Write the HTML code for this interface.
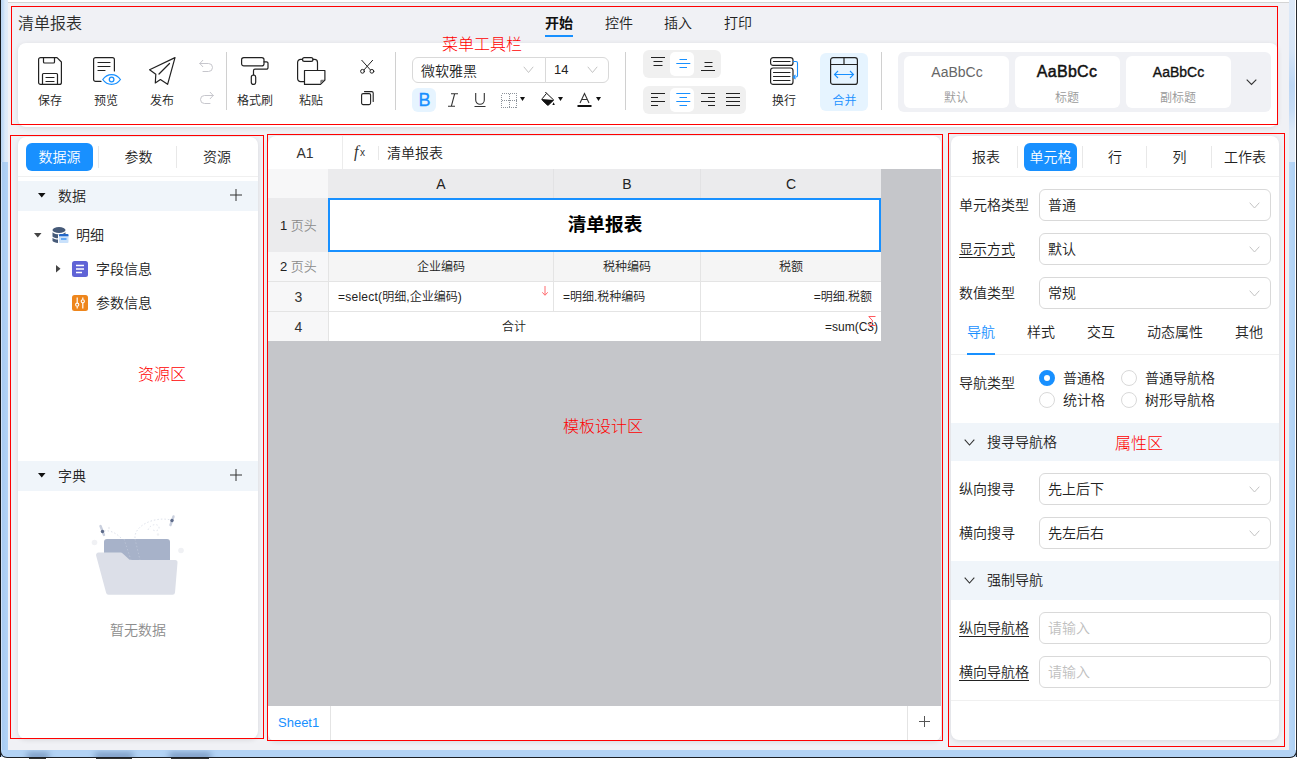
<!DOCTYPE html>
<html lang="zh-CN">
<head>
<meta charset="utf-8">
<title>清单报表</title>
<style>
*{box-sizing:border-box;margin:0;padding:0}
html,body{width:1298px;height:759px;overflow:hidden;background:#fff}
body{font-family:"Liberation Sans","Noto Sans CJK SC",sans-serif;font-size:14px;color:#222;position:relative;font-weight:350}
.abs{position:absolute}
#win{position:absolute;left:0;top:0;width:1298px;height:759px;background:#fff;overflow:hidden}
#app{left:8px;top:3px;width:1281px;height:747px;background:#f0f1f5}
#topline{left:8px;top:2px;width:1281px;height:1px;background:#d4d4d4}
.red{position:absolute;border:1px solid #f00;pointer-events:none}
.redtxt{position:absolute;color:#f00;font-size:16px;line-height:20px;white-space:nowrap;font-weight:300}
.card{position:absolute;background:#fff;border-radius:8px;box-shadow:0 1px 5px rgba(0,0,0,.1)}
.t{position:absolute;white-space:nowrap;line-height:20px;height:20px}
.c{transform:translateX(-50%)}
.r{transform:translateX(-100%)}
.f12{font-size:12px}.f13{font-size:13px}.f14{font-size:14px}
svg{position:absolute;overflow:visible}
.ico{fill:none;stroke:#222;stroke-width:1.2;stroke-linecap:round;stroke-linejoin:round}
.vsep{position:absolute;width:1px;background:#d0d0d0}
.sel{position:absolute;height:32px;border:1px solid #d9d9d9;border-radius:6px;background:#fff}
.hl{position:absolute;height:1px;background:#f0f0f0}
.u{text-decoration:underline;text-underline-offset:3px;text-decoration-thickness:1px}
.ph{color:#bfbfbf}
.sec{position:absolute;background:#f0f5fa}
.radio{position:absolute;width:16px;height:16px;border-radius:50%;border:1px solid #d9d9d9;background:#fff}
.radio.on{border:5px solid #1890ff}
</style>
</head>
<body>
<div id="win">
<div class="abs" id="app"></div>
<div class="abs" id="topline"></div>
<!-- ===== TOP TOOLBAR ===== -->
<div id="toolbar">
<div class="t" style="left:18px;top:14px;font-size:16px;color:#2b2b2b">清单报表</div>
<div class="t c" style="left:559px;top:13px;font-weight:700;color:#111">开始</div>
<div class="abs" style="left:545px;top:35px;width:28px;height:2px;background:#1890ff"></div>
<div class="t c" style="left:619px;top:13px">控件</div>
<div class="t c" style="left:678px;top:13px">插入</div>
<div class="t c" style="left:738px;top:13px">打印</div>
<div class="card" style="left:18px;top:43px;width:1260px;height:84px"></div>

<!-- save -->
<svg style="left:38px;top:57px" width="24" height="28" viewBox="0 0 24 28"><g class="ico">
<path d="M3 .6H19L23.4 5V25.4a2 2 0 0 1-2 2H2.6a2 2 0 0 1-2-2V2.6a2 2 0 0 1 2-2Z"/>
<path d="M5.5 .6V5a1 1 0 0 0 1 1h9a1 1 0 0 0 1-1V.6"/>
<path d="M4.5 27.4V17.5a1 1 0 0 1 1-1h13a1 1 0 0 1 1 1v9.9"/>
<path d="M8 20.500h8M8 24.500h8"/></g></svg>
<div class="t c f12" style="left:50px;top:91px">保存</div>
<!-- preview -->
<svg style="left:93px;top:57px" width="28" height="28" viewBox="0 0 28 28"><g class="ico">
<path d="M8 24.4H2.6a2 2 0 0 1-2-2V2.6a2 2 0 0 1 2-2H19.400a2 2 0 0 1 2 2V14"/>
<path d="M5 5.500h12M5 9.500h12M5 13.500h7"/></g>
<path d="M9.8 22.5C12.5 18.6 15.5 17.6 18.6 17.6s6.100 1 8.800 4.900C24.700 26.400 21.700 27.400 18.600 27.400S12.500 26.400 9.800 22.500Z" fill="#fff" stroke="#1890ff" stroke-width="1.300"/>
<circle cx="18.600" cy="22.500" r="2.300" fill="none" stroke="#1890ff" stroke-width="1.300"/></svg>
<div class="t c f12" style="left:106px;top:91px">预览</div>
<!-- publish -->
<svg style="left:148px;top:57px" width="28" height="28" viewBox="0 0 28 28"><g class="ico">
<path d="M27 .6L1.600 12.800L7.800 17.300L7.300 26L12.400 22.600L19.600 27.300Z"/>
<path d="M21.500 6.500L11 17"/></g></svg>
<div class="t c f12" style="left:162px;top:91px">发布</div>
<!-- undo / redo -->
<svg style="left:199px;top:59px" width="15" height="13" viewBox="0 0 15 13"><g class="ico" style="stroke:#c6c6cc;stroke-width:1">
<path d="M.8 4.500H9.500a4 4 0 0 1 0 8H4"/><path d="M3.800 1.300L.8 4.500L3.800 7.700"/></g></svg>
<svg style="left:199px;top:91px" width="15" height="13" viewBox="0 0 15 13"><g class="ico" style="stroke:#c6c6cc;stroke-width:1">
<path d="M14.200 4.500H5.500a4 4 0 0 0 0 8H11"/><path d="M11.200 1.300L14.200 4.500L11.200 7.700"/></g></svg>
<div class="vsep" style="left:226px;top:52px;height:58px"></div>
<!-- format painter -->
<svg style="left:240px;top:57px" width="30" height="28" viewBox="0 0 30 28"><g class="ico">
<rect x="1.600" y=".6" width="22.400" height="8.300" rx="2.200"/>
<path d="M24 4.800H26.500a1.500 1.500 0 0 1 1.500 1.500V10.700a1.500 1.500 0 0 1-1.500 1.500H15a1.500 1.500 0 0 0-1.500 1.500V18"/>
<rect x="11.300" y="18" width="4.400" height="9.400" rx="2.200"/></g></svg>
<div class="t c f12" style="left:255px;top:91px">格式刷</div>
<!-- paste -->
<svg style="left:297px;top:57px" width="29" height="28" viewBox="0 0 29 28"><g class="ico">
<path d="M7.500 24.600H3.600a3 3 0 0 1-3-3V5.400a3 3 0 0 1 3-3H5.500M16 2.400h1.500a3 3 0 0 1 3 3V13"/>
<rect x="5.500" y=".6" width="10.500" height="3.800" rx="1.900"/>
<path d="M7.500 13.500H27.900V23L23.500 27.400H7.500Z" fill="#fff"/></g>
<path d="M27.400 22.800L23.300 26.900V24a1.200 1.200 0 0 1 1.200-1.200Z" fill="#777"/></svg>
<div class="t c f12" style="left:311px;top:91px">粘贴</div>
<!-- cut -->
<svg style="left:360px;top:60px" width="15" height="14" viewBox="0 0 15 14"><g class="ico" style="stroke-width:1">
<path d="M1.800 .3L10.300 9.800M12.600 .3L4.100 9.800"/><circle cx="2.500" cy="11.300" r="1.900"/><circle cx="11.900" cy="11.300" r="1.900"/></g></svg>
<!-- copy -->
<svg style="left:361px;top:91px" width="13" height="15" viewBox="0 0 13 15"><g class="ico" style="stroke-width:1.100">
<rect x=".6" y="2.600" width="9" height="11" rx="1.500"/>
<path d="M3.500 .6H10.700a1.500 1.500 0 0 1 1.500 1.500V10.500"/></g></svg>
<div class="vsep" style="left:395px;top:52px;height:58px"></div>
<!-- font selects -->
<div class="sel" style="left:412px;top:57px;width:134px;height:26px;border-radius:6px 0 0 6px"></div>
<div class="sel" style="left:545px;top:57px;width:64px;height:26px;border-radius:0 6px 6px 0"></div>
<div class="t" style="left:421px;top:61px;font-size:14px">微软雅黑</div>
<div class="t f13" style="left:554px;top:60px">14</div>
<svg style="left:523px;top:66px" width="11" height="8" viewBox="0 0 11 8"><path d="M.8 .8L5.500 6.500L10.200 .8" fill="none" stroke="#c4c4c4" stroke-width="1"/></svg>
<svg style="left:587px;top:66px" width="11" height="8" viewBox="0 0 11 8"><path d="M.8 .8L5.500 6.500L10.200 .8" fill="none" stroke="#c4c4c4" stroke-width="1"/></svg>
<!-- B I U -->
<div class="abs" style="left:412px;top:88px;width:24px;height:24px;border-radius:6px;background:#e6f4ff"></div>
<div class="t c" style="left:424.500px;top:90px;font-size:18px;color:#1890ff;-webkit-text-stroke:.3px #1890ff">B</div>
<svg style="left:447px;top:93px" width="12" height="14" viewBox="0 0 12 14"><path d="M4 .7H11M1 13.300H8M7.700 .7L4.300 13.300" fill="none" stroke="#333" stroke-width="1.100"/></svg>
<svg style="left:474px;top:93px" width="12" height="14" viewBox="0 0 12 14"><path d="M1.700 0V7a4.300 4.300 0 0 0 8.600 0V0M.5 13.500H11.500" fill="none" stroke="#333" stroke-width="1.100"/></svg>
<!-- border icon -->
<svg style="left:501px;top:93px" width="16" height="15" viewBox="0 0 16 15"><g fill="none" stroke="#8d939b" stroke-width="1" stroke-dasharray="1 1" shape-rendering="crispEdges">
<rect x=".5" y=".5" width="15" height="14"/><path d="M8.500 .5V14.500M.5 7.500H15.500"/></g></svg>
<svg style="left:520px;top:97px" width="6" height="4" viewBox="0 0 6 4"><path d="M0 0H5L2.500 4Z" fill="#111"/></svg>
<!-- fill icon -->
<svg style="left:541px;top:92px" width="14" height="14" viewBox="0 0 14 14"><path d="M4.300 0L5.600 1.300L12.700 8L7.600 12.900a1 1 0 0 1-1.400 0L1.200 8.100a1 1 0 0 1 0-1.400L5.600 1.300" fill="none" stroke="#111" stroke-width="1"/><path d="M1 7L12.700 8L7.600 12.900a1 1 0 0 1-1.400 0L1.200 8.100Z" fill="#111"/><path d="M12.600 10.300L13.800 13H11.400Z" fill="#111"/></svg>
<svg style="left:558px;top:97px" width="6" height="4" viewBox="0 0 6 4"><path d="M0 0H5L2.500 4Z" fill="#111"/></svg>
<!-- font color -->
<svg style="left:577px;top:93px" width="15" height="14" viewBox="0 0 15 14"><path d="M3 10L7.500 .5L12 10M4.700 6.500H10.300" fill="none" stroke="#333" stroke-width="1.100"/><rect x=".5" y="12" width="14" height="2" fill="#111"/></svg>
<svg style="left:596px;top:97px" width="6" height="4" viewBox="0 0 6 4"><path d="M0 0H5L2.500 4Z" fill="#111"/></svg>
<div class="vsep" style="left:625px;top:52px;height:58px"></div>
<!-- align groups -->
<div class="abs" style="left:643px;top:50px;width:78px;height:28px;border-radius:6px;background:#f0f0f0"></div>
<div class="abs" style="left:670px;top:52px;width:24px;height:24px;border-radius:5px;background:#fff"></div>
<div class="abs" style="left:643px;top:86px;width:103px;height:28px;border-radius:6px;background:#f0f0f0"></div>
<div class="abs" style="left:670px;top:88px;width:24px;height:24px;border-radius:5px;background:#fff"></div>
<svg style="left:643px;top:50px" width="103" height="64" viewBox="0 0 103 64"><g fill="none" stroke="#222" stroke-width="1.100">
<path d="M8 7.500H22M10.500 11.500H19.500M10.500 15.500H19.500"/>
<path d="M61.500 12.500H69.500M61.500 16.500H69.500M58 20.500H72"/>
<path d="M8 43.500H22M8 47.500H15M8 51.500H22M8 55.500H15"/>
<path d="M58 43.500H72M65 47.500H72M58 51.500H72M65 55.500H72"/>
<path d="M83 43.500H97M83 47.500H97M83 51.500H97M83 55.500H97"/></g>
<g fill="none" stroke="#1890ff" stroke-width="1.100">
<path d="M36.500 9.500H44M33.300 13.500H47.300M36.500 17.500H44"/>
<path d="M33.300 43.500H47.300M36.500 47.500H44M33.300 51.500H47.300M36.500 55.500H44"/></g></svg>
<!-- wrap -->
<svg style="left:770px;top:57px" width="29" height="28" viewBox="0 0 29 28"><g class="ico">
<rect x=".6" y=".6" width="22.400" height="7.800" rx="2.500"/><path d="M3.500 4.500H20"/>
<rect x=".6" y="11" width="22.400" height="16.400" rx="2.500"/><path d="M3.500 15.500H20M3.500 19.500H20M3.500 23.500H20"/></g>
<path d="M23 4.500H26a1.500 1.500 0 0 1 1.500 1.500V18.500a1.500 1.500 0 0 1-1.500 1.500H23.500M25.500 17.800L23.300 20L25.500 22.200" fill="none" stroke="#1890ff" stroke-width="1.100"/></svg>
<div class="t c f12" style="left:784px;top:91px">换行</div>
<!-- merge -->
<div class="abs" style="left:820px;top:53px;width:48px;height:58px;border-radius:6px;background:#e6f4ff"></div>
<svg style="left:830px;top:57px" width="28" height="28" viewBox="0 0 28 28"><g class="ico">
<rect x=".6" y=".6" width="26.800" height="26.800" rx="2.500"/><path d="M.6 7.500H27.400M14 .6V7.500"/></g>
<path d="M4.500 17.500H23.500M8 14L4.500 17.500L8 21M20 14L23.500 17.500L20 21" fill="none" stroke="#1890ff" stroke-width="1.100"/></svg>
<div class="t c f12" style="left:844.500px;top:91px;color:#1890ff">合并</div>
<div class="vsep" style="left:881px;top:52px;height:58px"></div>
<!-- style gallery -->
<div class="abs" style="left:898px;top:52px;width:373px;height:60px;border-radius:6px;background:#f0f1f5"></div>
<div class="abs" style="left:904px;top:56px;width:105px;height:52px;border-radius:6px;background:#fff"></div>
<div class="abs" style="left:1015px;top:56px;width:105px;height:52px;border-radius:6px;background:#fff"></div>
<div class="abs" style="left:1126px;top:56px;width:105px;height:52px;border-radius:6px;background:#fff"></div>
<div class="t c" style="left:957px;top:62px;color:#666">AaBbCc</div>
<div class="t c f12" style="left:956px;top:88px;color:#999">默认</div>
<div class="t c" style="left:1067px;top:62px;font-size:16px;color:#111;-webkit-text-stroke:.45px #111;letter-spacing:.3px">AaBbCc</div>
<div class="t c f12" style="left:1067px;top:88px;color:#999">标题</div>
<div class="t c" style="left:1178.500px;top:62px;color:#111;-webkit-text-stroke:.35px #111">AaBbCc</div>
<div class="t c f12" style="left:1178px;top:88px;color:#999">副标题</div>
<svg style="left:1246px;top:79px" width="11" height="7" viewBox="0 0 11 7"><path d="M.7 .7L5.500 5.500L10.300 .7" fill="none" stroke="#333" stroke-width="1.100"/></svg>
</div>
<!-- ===== LEFT PANEL ===== -->
<div id="left">
<div class="card" style="left:18px;top:137px;width:240px;height:602px"></div>
<div class="abs" style="left:26px;top:143px;width:67px;height:28px;border-radius:6px;background:#1890ff"></div>
<div class="t c" style="left:59.500px;top:147px;color:#fff">数据源</div>
<div class="vsep" style="left:98px;top:146px;height:22px;background:#e8e8e8"></div>
<div class="t c" style="left:138.500px;top:147px">参数</div>
<div class="vsep" style="left:176px;top:146px;height:22px;background:#e8e8e8"></div>
<div class="t c" style="left:217px;top:147px">资源</div>
<div class="hl" style="left:18px;top:176px;width:240px"></div>
<!-- section: 数据 -->
<div class="sec" style="left:18px;top:181px;width:240px;height:30px"></div>
<svg style="left:38px;top:193px" width="8" height="5" viewBox="0 0 8 5"><path d="M0 0H7.500L3.750 4.500Z" fill="#111"/></svg>
<div class="t" style="left:58px;top:186px">数据</div>
<svg style="left:230px;top:189px" width="12" height="12" viewBox="0 0 12 12"><path d="M6 0V12M0 6H12" stroke="#333" stroke-width="1" fill="none"/></svg>
<!-- tree -->
<svg style="left:34px;top:233px" width="8" height="5" viewBox="0 0 8 5"><path d="M0 0H7.500L3.750 4.500Z" fill="#444"/></svg>
<svg style="left:52px;top:227px" width="17" height="16" viewBox="0 0 17 16">
<ellipse cx="7" cy="3" rx="6.500" ry="3" fill="#465a78"/>
<path d="M.5 5.200C2 7 5 7.300 7 7.300S12 7 13.500 5.200V7.500H6V11.300C3.500 11.200 1.500 10.600 .5 9.500Z" fill="#465a78"/>
<path d="M.5 10.700C1.500 11.800 3.500 12.500 6 12.600V15.900C3.500 15.800 1.500 15.200 .5 14Z" fill="#465a78"/>
<rect x="7" y="7" width="9.500" height="9" rx="1" fill="#c9e1fb"/>
<path d="M7 8a1 1 0 0 1 1-1H15.500a1 1 0 0 1 1 1V9.200H7Z" fill="#2468c8"/>
<path d="M9 12H14.500" stroke="#2f8df5" stroke-width="1.300" fill="none"/></svg>
<div class="t" style="left:76px;top:225px">明细</div>
<svg style="left:56px;top:265px" width="5" height="8" viewBox="0 0 5 8"><path d="M0 0V7.500L4.500 3.750Z" fill="#444"/></svg>
<svg style="left:72px;top:261px" width="16" height="16" viewBox="0 0 16 16"><rect width="16" height="16" rx="2.500" fill="#5f63d6"/><path d="M4 4.500H12M4 8H12M4 11.500H10" stroke="#fff" stroke-width="1.400" fill="none"/></svg>
<div class="t" style="left:96px;top:259px">字段信息</div>
<svg style="left:72px;top:295px" width="16" height="16" viewBox="0 0 16 16"><rect width="16" height="16" rx="2.500" fill="#ee861c"/><path d="M5.200 2.500V8M5.200 11.500V13.500M10.800 2.500V4.500M10.800 8V13.500" stroke="#fff" stroke-width="1.200" fill="none"/><circle cx="5.200" cy="9.700" r="1.600" fill="none" stroke="#fff" stroke-width="1.100"/><circle cx="10.800" cy="6.300" r="1.600" fill="none" stroke="#fff" stroke-width="1.100"/></svg>
<div class="t" style="left:96px;top:293px">参数信息</div>
<!-- section: 字典 -->
<div class="sec" style="left:18px;top:461px;width:240px;height:30px"></div>
<svg style="left:38px;top:473px" width="8" height="5" viewBox="0 0 8 5"><path d="M0 0H7.500L3.750 4.500Z" fill="#111"/></svg>
<div class="t" style="left:58px;top:466px">字典</div>
<svg style="left:230px;top:469px" width="12" height="12" viewBox="0 0 12 12"><path d="M6 0V12M0 6H12" stroke="#333" stroke-width="1" fill="none"/></svg>
<!-- empty illustration -->
<svg style="left:88px;top:512px" width="100" height="86" viewBox="0 0 100 86">
<circle cx="6.500" cy="30.500" r="2.800" fill="#f0f1f4"/><circle cx="93" cy="38.500" r="2.800" fill="#f0f1f4"/>
<circle cx="21" cy="16" r="1.200" fill="#f0f1f4"/><circle cx="70" cy="22.500" r="1.200" fill="#f0f1f4"/>
<path d="M33 26C27 20 21 18 15 19" fill="none" stroke="#dfe3ec" stroke-width="1" stroke-dasharray="1.500 2"/>
<path d="M47 26C46 14 66 4 83 8" fill="none" stroke="#dfe3ec" stroke-width="1" stroke-dasharray="1.500 2"/>
<path d="M60 18C62 12 70 11 71 15S66 20 64 17" fill="none" stroke="#e4e7ef" stroke-width="1" stroke-dasharray="1.500 2"/>
<path d="M12.500 14L16 23" stroke="#c9cfdd" stroke-width="2.400" stroke-linecap="round"/><circle cx="14.500" cy="19.500" r="1.700" fill="#5d6b8a"/>
<path d="M85.500 4.500L82.500 13" stroke="#c9cfdd" stroke-width="2.400" stroke-linecap="round"/><circle cx="84" cy="8.500" r="1.700" fill="#5d6b8a"/>
<rect x="16" y="27" width="66" height="30" rx="3" fill="#a7b2c9"/>
<path d="M36 27L43 48M47 27L52 48" stroke="#b9c2d5" stroke-width="1" stroke-dasharray="1.500 2" fill="none"/>
<path d="M10.500 40.500H32.500a3 3 0 0 1 2.200 1L41 47.300a2 2 0 0 0 1.500 .7H87a2.500 2.500 0 0 1 2.500 2.700L87 80.500a2.500 2.500 0 0 1-2.500 2.300H20.500a2.500 2.500 0 0 1-2.400-2L8.100 43.500a2.500 2.500 0 0 1 2.400-3Z" fill="#dcdfe8"/>
</svg>
<div class="t c" style="left:138px;top:620px;color:#8c8c8c">暂无数据</div>
</div>
<!-- ===== CENTER PANEL ===== -->
<div id="center">
<div class="card" style="left:268px;top:136px;width:673px;height:605px;overflow:hidden">
  <div class="abs" style="left:0;top:33px;width:674px;height:537px;background:#c5c6ca"></div>
</div>
<!-- formula bar -->
<div class="vsep" style="left:342px;top:136px;height:33px;background:#ececec"></div>
<div class="t c" style="left:305px;top:143px;color:#333">A1</div>
<div class="t" style="left:354px;top:142px;font-family:'Liberation Serif','DejaVu Serif',serif;font-style:italic;font-size:16px;color:#333">f<span style="font-family:'Liberation Sans',sans-serif;font-style:normal;font-size:10px;position:relative;top:-1px;left:1.500px">x</span></div>
<div class="vsep" style="left:378px;top:146px;height:14px;background:#e8e8e8"></div>
<div class="t" style="left:387px;top:143px;color:#222">清单报表</div>
<!-- grid -->
<div class="abs" style="left:268px;top:169px;width:613px;height:172px;background:#fff"></div>
<div class="abs" style="left:268px;top:169px;width:60px;height:29px;background:#f7f7f8"></div>
<div class="abs" style="left:328px;top:169px;width:553px;height:29px;background:#ebebed"></div>
<div class="abs" style="left:268px;top:198px;width:60px;height:54px;background:#ebebed"></div>
<div class="abs" style="left:268px;top:252px;width:60px;height:89px;background:#f7f7f8"></div>
<div class="abs" style="left:328px;top:252px;width:553px;height:30px;background:#f5f5f5"></div>
<!-- grid lines -->
<div class="abs" style="left:553px;top:169px;width:1px;height:29px;background:#e2e2e4"></div>
<div class="abs" style="left:700px;top:169px;width:1px;height:29px;background:#e2e2e4"></div>
<div class="abs" style="left:328px;top:252px;width:1px;height:89px;background:#e4e4e4"></div>
<div class="abs" style="left:553px;top:252px;width:1px;height:60px;background:#e4e4e4"></div>
<div class="abs" style="left:700px;top:252px;width:1px;height:89px;background:#e4e4e4"></div>
<div class="abs" style="left:268px;top:281px;width:613px;height:1px;background:#e4e4e4"></div>
<div class="abs" style="left:268px;top:311px;width:613px;height:1px;background:#e4e4e4"></div>
<!-- col headers -->
<div class="t c" style="left:441px;top:174px;color:#222">A</div>
<div class="t c" style="left:627px;top:174px;color:#222">B</div>
<div class="t c" style="left:791px;top:174px;color:#222">C</div>
<!-- row headers -->
<div class="t f13" style="left:280px;top:216px;color:#222">1 <span style="color:#8c8c8c">页头</span></div>
<div class="t f13" style="left:280px;top:257px;color:#222">2 <span style="color:#8c8c8c">页头</span></div>
<div class="t c" style="left:298.500px;top:287px;color:#333">3</div>
<div class="t c" style="left:298.500px;top:317px;color:#333">4</div>
<!-- selection -->
<div class="abs" style="left:328px;top:198px;width:553px;height:54px;border:2px solid #1890ff;background:#fff"></div>
<div class="t c" style="left:605px;top:215px;font-size:18.670px;font-weight:700;color:#000">清单报表</div>
<!-- cells -->
<div class="t c f12" style="left:441px;top:257px">企业编码</div>
<div class="t c f12" style="left:627px;top:257px">税种编码</div>
<div class="t c f12" style="left:791px;top:257px">税额</div>
<div class="t f12" style="left:338px;top:287px"><span style="letter-spacing:.25px">=select(</span>明细,企业编码)</div>
<svg style="left:542px;top:286px" width="6" height="10" viewBox="0 0 6 10"><path d="M3 0V9M.3 6.300L3 9.300L5.700 6.300" fill="none" stroke="#ff6b6e" stroke-width="1"/></svg>
<div class="t f12" style="left:563px;top:287px">=明细.税种编码</div>
<div class="t r f12" style="left:872px;top:287px">=明细.税额</div>
<div class="t c f12" style="left:514px;top:317px">合计</div>
<div class="t r f12" style="left:878px;top:317px">=sum(C3)</div>
<svg style="left:868px;top:316px" width="8" height="10" viewBox="0 0 8 10"><path d="M7.500 .5H.8L4.800 5L.8 9.500H7.500" fill="none" stroke="#ff5a5f" stroke-width="1"/></svg>
<!-- sheet bar -->
<div class="abs" style="left:268px;top:706px;width:673px;height:35px;background:#fff;border-radius:0 0 8px 8px"></div>
<div class="t f13" style="left:278px;top:713px;color:#1890ff">Sheet1</div>
<div class="vsep" style="left:330px;top:706px;height:35px;background:#e4e4e4"></div>
<div class="vsep" style="left:907px;top:706px;height:35px;background:#e4e4e4"></div>
<svg style="left:919px;top:716px" width="12" height="12" viewBox="0 0 12 12"><path d="M5.500 0V11M0 5.500H11" stroke="#555" stroke-width="1" fill="none"/></svg>
</div>
<!-- ===== RIGHT PANEL ===== -->
<div id="right">
<div class="card" style="left:951px;top:136px;width:328px;height:604px"></div>
<div class="t c" style="left:986px;top:147px">报表</div>
<div class="vsep" style="left:1017px;top:146px;height:22px;background:#e8e8e8"></div>
<div class="abs" style="left:1024px;top:143px;width:53px;height:28px;border-radius:6px;background:#1890ff"></div>
<div class="t c" style="left:1050.500px;top:147px;color:#fff">单元格</div>
<div class="vsep" style="left:1082px;top:146px;height:22px;background:#e8e8e8"></div>
<div class="t c" style="left:1115px;top:147px">行</div>
<div class="vsep" style="left:1146px;top:146px;height:22px;background:#e8e8e8"></div>
<div class="t c" style="left:1179.500px;top:147px">列</div>
<div class="vsep" style="left:1211px;top:146px;height:22px;background:#e8e8e8"></div>
<div class="t c" style="left:1245px;top:147px">工作表</div>
<div class="hl" style="left:951px;top:176px;width:328px"></div>
<!-- form rows -->
<div class="t" style="left:959px;top:195px">单元格类型</div>
<div class="sel" style="left:1039px;top:189px;width:232px"></div>
<div class="t" style="left:1048px;top:195px">普通</div>
<svg style="left:1249px;top:202px" width="11" height="7" viewBox="0 0 11 7"><path d="M.7 .7L5.500 6L10.300 .7" fill="none" stroke="#c4c4c4" stroke-width="1"/></svg>
<div class="t u" style="left:959px;top:239px">显示方式</div>
<div class="sel" style="left:1039px;top:233px;width:232px"></div>
<div class="t" style="left:1048px;top:239px">默认</div>
<svg style="left:1249px;top:246px" width="11" height="7" viewBox="0 0 11 7"><path d="M.7 .7L5.500 6L10.300 .7" fill="none" stroke="#c4c4c4" stroke-width="1"/></svg>
<div class="t" style="left:959px;top:283px">数值类型</div>
<div class="sel" style="left:1039px;top:277px;width:232px"></div>
<div class="t" style="left:1048px;top:283px">常规</div>
<svg style="left:1249px;top:290px" width="11" height="7" viewBox="0 0 11 7"><path d="M.7 .7L5.500 6L10.300 .7" fill="none" stroke="#c4c4c4" stroke-width="1"/></svg>
<!-- sub tabs -->
<div class="t" style="left:967px;top:322px;color:#1890ff">导航</div>
<div class="t" style="left:1027px;top:322px">样式</div>
<div class="t" style="left:1087px;top:322px">交互</div>
<div class="t" style="left:1147px;top:322px">动态属性</div>
<div class="t" style="left:1235px;top:322px">其他</div>
<div class="hl" style="left:951px;top:354px;width:328px"></div>
<div class="abs" style="left:967px;top:353px;width:28px;height:2px;background:#1890ff"></div>
<!-- radio group -->
<div class="t" style="left:959px;top:373px">导航类型</div>
<div class="radio on" style="left:1039px;top:370px"></div>
<div class="t" style="left:1063px;top:368px">普通格</div>
<div class="radio" style="left:1121px;top:370px"></div>
<div class="t" style="left:1145px;top:368px">普通导航格</div>
<div class="radio" style="left:1039px;top:392px"></div>
<div class="t" style="left:1063px;top:390px">统计格</div>
<div class="radio" style="left:1121px;top:392px"></div>
<div class="t" style="left:1145px;top:390px">树形导航格</div>
<!-- section 1 -->
<div class="sec" style="left:951px;top:423px;width:328px;height:38px"></div>
<svg style="left:964px;top:439px" width="11" height="7" viewBox="0 0 11 7"><path d="M.7 .7L5.500 6L10.300 .7" fill="none" stroke="#333" stroke-width="1.100"/></svg>
<div class="t" style="left:987px;top:432px">搜寻导航格</div>
<div class="t" style="left:959px;top:479px">纵向搜寻</div>
<div class="sel" style="left:1039px;top:473px;width:232px"></div>
<div class="t" style="left:1048px;top:479px">先上后下</div>
<svg style="left:1249px;top:486px" width="11" height="7" viewBox="0 0 11 7"><path d="M.7 .7L5.500 6L10.300 .7" fill="none" stroke="#c4c4c4" stroke-width="1"/></svg>
<div class="t" style="left:959px;top:523px">横向搜寻</div>
<div class="sel" style="left:1039px;top:517px;width:232px"></div>
<div class="t" style="left:1048px;top:523px">先左后右</div>
<svg style="left:1249px;top:530px" width="11" height="7" viewBox="0 0 11 7"><path d="M.7 .7L5.500 6L10.300 .7" fill="none" stroke="#c4c4c4" stroke-width="1"/></svg>
<!-- section 2 -->
<div class="sec" style="left:951px;top:561px;width:328px;height:39px"></div>
<svg style="left:964px;top:577px" width="11" height="7" viewBox="0 0 11 7"><path d="M.7 .7L5.500 6L10.300 .7" fill="none" stroke="#333" stroke-width="1.100"/></svg>
<div class="t" style="left:987px;top:570px">强制导航</div>
<div class="t u" style="left:959px;top:618px">纵向导航格</div>
<div class="sel" style="left:1039px;top:612px;width:232px"></div>
<div class="t ph" style="left:1048px;top:618px">请输入</div>
<div class="t u" style="left:959px;top:662px">横向导航格</div>
<div class="sel" style="left:1039px;top:656px;width:232px"></div>
<div class="t ph" style="left:1048px;top:662px">请输入</div>
<div class="hl" style="left:951px;top:700px;width:328px"></div>
</div>
<!-- red annotations -->
<div class="red" style="left:11px;top:6px;width:1267px;height:119px"></div>
<div class="red" style="left:10px;top:135px;width:254px;height:604px"></div>
<div class="red" style="left:267px;top:134px;width:676px;height:607px"></div>
<div class="red" style="left:948px;top:133px;width:337px;height:614px"></div>
<div class="redtxt" style="left:442px;top:35px">菜单工具栏</div>
<div class="redtxt" style="left:138px;top:365px">资源区</div>
<div class="redtxt" style="left:563px;top:417px">模板设计区</div>
<div class="redtxt" style="left:1115px;top:434px">属性区</div>

<!-- window frame -->
<div class="abs" style="left:0;top:0;width:8px;height:757px;background:linear-gradient(90deg,#15181c 0,#15181c 1px,#b9d5f3 1px,#c3dbf5 3px,#dce9f8 5px,#e1ecf9 8px)"></div>
<div class="abs" style="left:0;top:162px;width:8px;height:595px;background:linear-gradient(90deg,#15181c 0,#15181c 1px,#cfe2f8 1px,#cfe2f8 2px,#a8cbf1 2px,#b3d3f5 8px)"></div>
<div class="abs" style="left:1289px;top:0;width:9px;height:757px;background:linear-gradient(90deg,rgba(255,255,255,0) 0,rgba(255,255,255,0) 6px,#fff 6px,#fff 7px,#262a30 7px,#262a30 8px,#fff 8px),linear-gradient(180deg,#dde9f8 0,#d6e5f7 50px,#bdd7f5 85px,#c6dcf6 110px,#dce9f8 130px,#dfeaf8 162px)"></div>
<div class="abs" style="left:1289px;top:162px;width:6px;height:595px;background:linear-gradient(90deg,#b9d7f7 0,#add0f4 6px)"></div>
<div class="abs" style="left:1px;top:750px;width:1295px;height:7px;background:#b3d3f5;overflow:hidden">
<div class="abs" style="left:26px;top:3px;width:22px;height:6px;background:#6f8fb8;filter:blur(3px)"></div>
<div class="abs" style="left:94px;top:3px;width:38px;height:6px;background:#6f8fb8;filter:blur(3px)"></div>
<div class="abs" style="left:168px;top:3px;width:42px;height:6px;background:#6f8fb8;filter:blur(3px)"></div>
</div>
<div class="abs" style="left:0;top:750px;width:1297px;height:8px;border-bottom-left-radius:7px;border-bottom-right-radius:7px;border:1px solid #1c1f24;border-top:none;background:transparent"></div>
<div class="abs" style="left:0;top:758px;width:1298px;height:1px;background:#fff"></div>
<div class="abs" style="left:29px;top:758px;width:17px;height:1px;background:#333"></div>
<div class="abs" style="left:96px;top:758px;width:36px;height:1px;background:#333"></div>
<div class="abs" style="left:171px;top:758px;width:38px;height:1px;background:#333"></div>
</div>
</body>
</html>
